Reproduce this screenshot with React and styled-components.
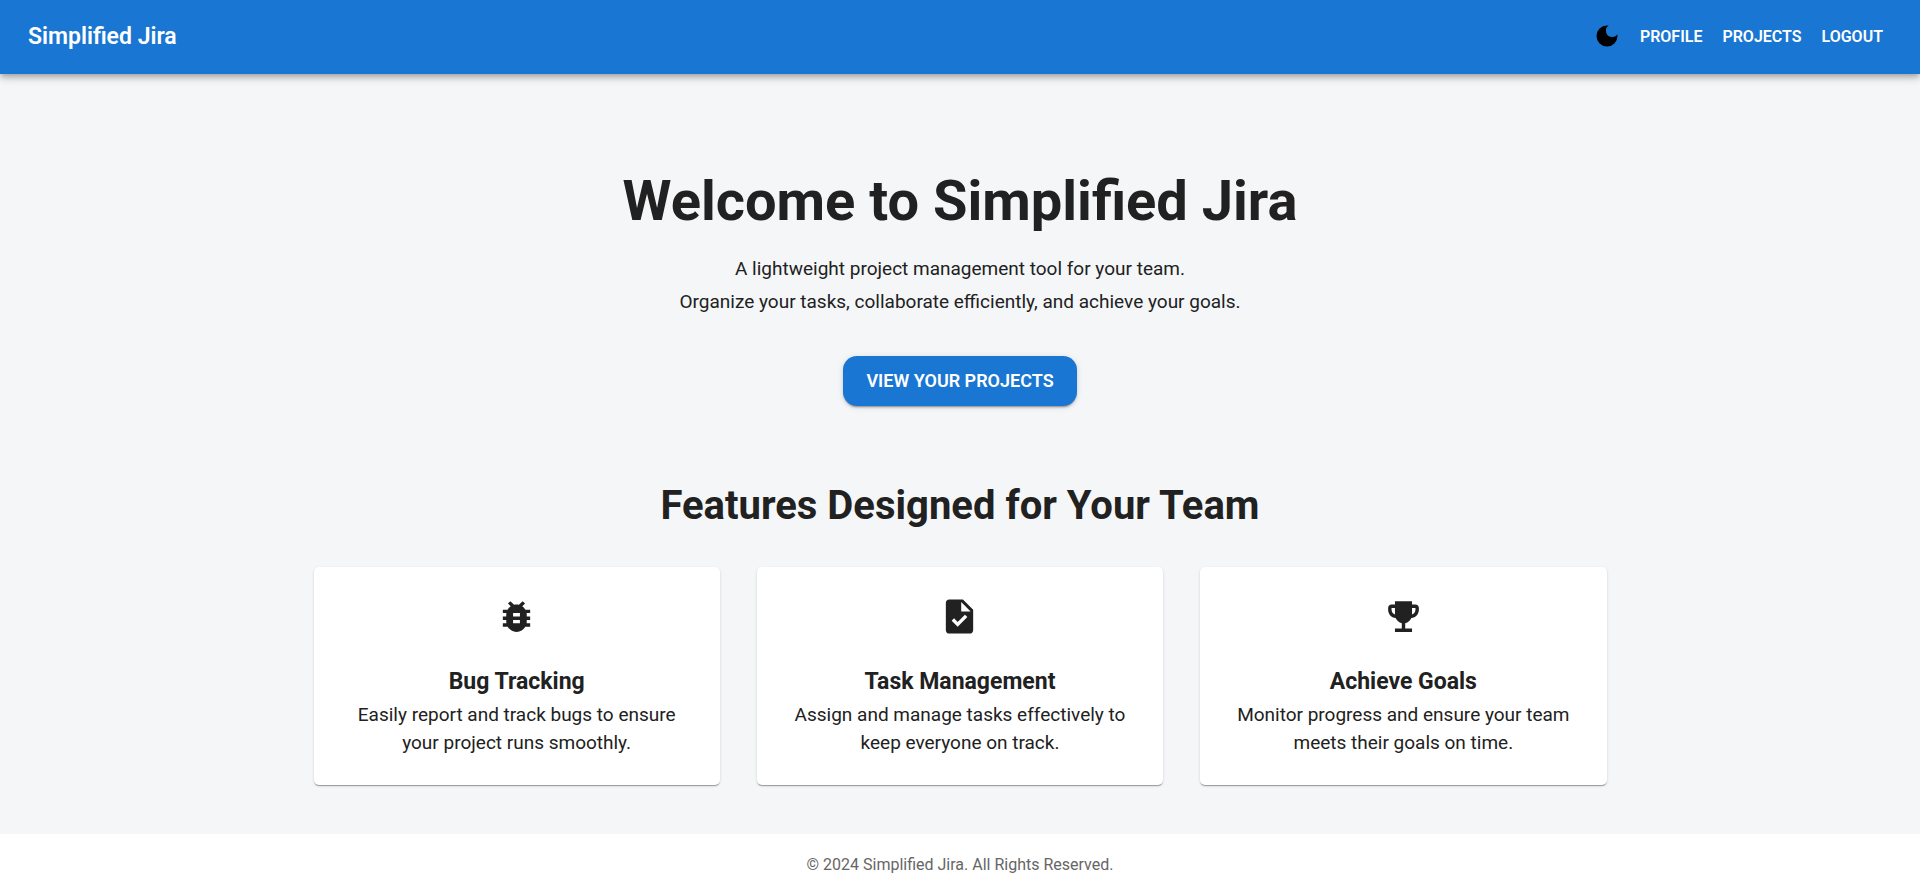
import React from "react";
import styled, { createGlobalStyle } from "styled-components";
import { MdBugReport, MdTask, MdDarkMode, MdEmojiEvents } from "react-icons/md";

const GlobalStyle = createGlobalStyle`
  *, *::before, *::after { box-sizing: border-box; }
  body {
    margin: 0;
    background: #f4f6f8;
    color: #212121;
    font-family: Roboto, "Liberation Sans", sans-serif;
  }
  h1, h2, h3, p { margin: 0; }
`;

const Page = styled.div`
  display: flex;
  flex-direction: column;
  min-height: 100vh;
`;

const TopBar = styled.header`
  display: flex;
  align-items: center;
  justify-content: space-between;
  min-height: 74px;
  padding: 0 28px;
  background: #1976d2;
  color: #fff;
  box-shadow: 0 2px 5px -1px rgba(0, 0, 0, 0.2), 0 5px 6px rgba(0, 0, 0, 0.14),
    0 1px 12px rgba(0, 0, 0, 0.12);
`;

const Brand = styled.a`
  color: inherit;
  font-size: 23px;
  font-weight: 600;
  line-height: 32px;
  text-decoration: none;
`;

const Nav = styled.nav`
  display: flex;
  align-items: center;
  gap: 2px;
`;

const ThemeToggle = styled.button`
  display: flex;
  padding: 8px 8px 10px;
  border: 0;
  background: none;
  color: #000;
  cursor: pointer;
`;

const NavLink = styled.a`
  padding: 6px 9px;
  color: inherit;
  font-size: 16px;
  font-weight: 600;
  line-height: 28px;
  text-decoration: none;
  text-transform: uppercase;
`;

const Main = styled.main`
  display: flex;
  flex: 1;
  flex-direction: column;
  align-items: center;
  padding: 93px 28px 48px;
  text-align: center;
`;

const Hero = styled.section`
  display: flex;
  flex-direction: column;
  align-items: center;
`;

const HeroTitle = styled.h1`
  font-size: 56px;
  font-weight: 700;
  line-height: 68px;
`;

const HeroText = styled.p`
  margin-top: 17px;
  font-size: 19px;
  line-height: 33px;
`;

const ProjectsButton = styled.button`
  margin-top: 38px;
  padding: 11px 23px;
  border: 0;
  border-radius: 14px;
  background: #1976d2;
  color: #fff;
  font-family: inherit;
  font-size: 18px;
  font-weight: 600;
  line-height: 28px;
  text-transform: uppercase;
  cursor: pointer;
  box-shadow: 0 3px 1px -2px rgba(0, 0, 0, 0.2), 0 2px 2px rgba(0, 0, 0, 0.14),
    0 1px 6px rgba(0, 0, 0, 0.12);
`;

const Features = styled.section`
  width: 100%;
  max-width: 1293px;
  margin-top: 75px;
`;

const FeaturesTitle = styled.h2`
  font-size: 40px;
  font-weight: 700;
  line-height: 50px;
`;

const CardGrid = styled.div`
  display: grid;
  grid-template-columns: repeat(auto-fit, minmax(300px, 1fr));
  gap: 37px;
  margin-top: 36px;
`;

const Card = styled.article`
  display: flex;
  flex-direction: column;
  align-items: center;
  padding: 29px 29px 28px;
  border-radius: 5px;
  background: #fff;
  box-shadow: 0 2px 1px -1px rgba(0, 0, 0, 0.2), 0 1px 1px rgba(0, 0, 0, 0.14),
    0 1px 3px rgba(0, 0, 0, 0.12);
`;

const CardTitle = styled.h3`
  margin-top: 28px;
  font-size: 23px;
  font-weight: 700;
  line-height: 34px;
`;

const CardText = styled.p`
  margin-top: 2px;
  font-size: 19px;
  line-height: 28px;
`;

const Footer = styled.footer`
  padding: 20px 28px 16px;
  background: #fff;
  color: #666;
  font-size: 16px;
  line-height: 22px;
  text-align: center;
`;

const features = [
  { Icon: MdBugReport, title: "Bug Tracking", text: "Easily report and track bugs to ensure your project runs smoothly." },
  { Icon: MdTask, title: "Task Management", text: "Assign and manage tasks effectively to keep everyone on track." },
  { Icon: MdEmojiEvents, title: "Achieve Goals", text: "Monitor progress and ensure your team meets their goals on time." },
];

export default function App() {
  return (
    <Page>
      <GlobalStyle />
      <TopBar>
        <Brand href="#home">Simplified Jira</Brand>
        <Nav>
          <ThemeToggle type="button" aria-label="Toggle dark mode">
            <MdDarkMode size={28} />
          </ThemeToggle>
          <NavLink href="#profile">Profile</NavLink>
          <NavLink href="#projects">Projects</NavLink>
          <NavLink href="#logout">Logout</NavLink>
        </Nav>
      </TopBar>
      <Main>
        <Hero>
          <HeroTitle>Welcome to Simplified Jira</HeroTitle>
          <HeroText>
            A lightweight project management tool for your team.
            <br />
            Organize your tasks, collaborate efficiently, and achieve your goals.
          </HeroText>
          <ProjectsButton type="button">View Your Projects</ProjectsButton>
        </Hero>
        <Features>
          <FeaturesTitle>Features Designed for Your Team</FeaturesTitle>
          <CardGrid>
            {features.map(({ Icon, title, text }) => (
              <Card key={title}>
                <Icon size={41} aria-hidden="true" />
                <CardTitle>{title}</CardTitle>
                <CardText>{text}</CardText>
              </Card>
            ))}
          </CardGrid>
        </Features>
      </Main>
      <Footer>© 2024 Simplified Jira. All Rights Reserved.</Footer>
    </Page>
  );
}
